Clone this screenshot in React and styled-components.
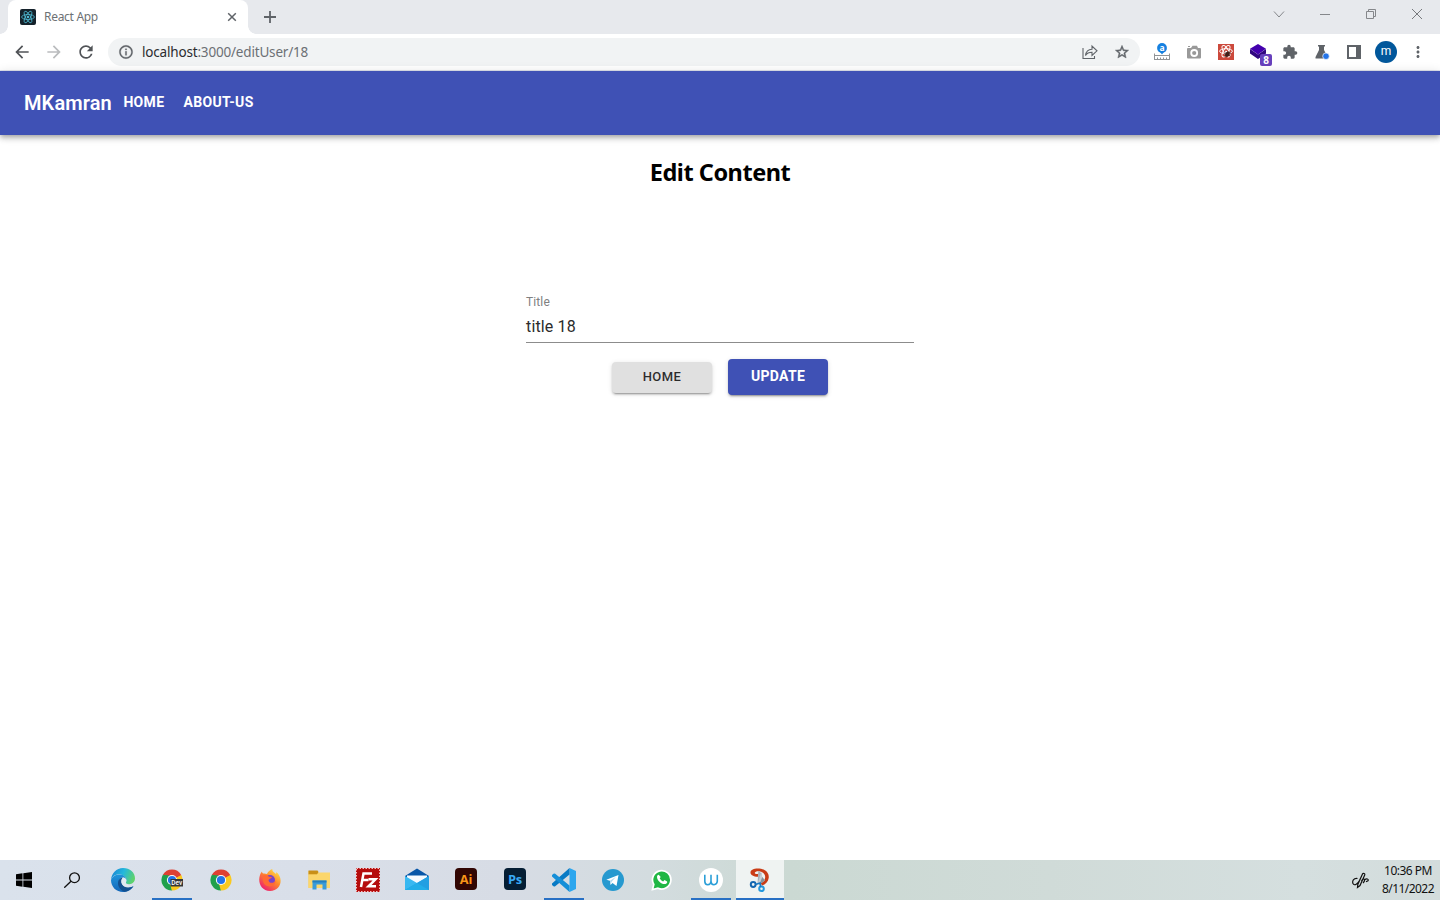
import React from "react";
import styled, { createGlobalStyle, css } from "styled-components";
import {
  MdArrowBack,
  MdArrowForward,
  MdRefresh,
  MdInfoOutline,
  MdStarBorder,
  MdExtension,
  MdMoreVert,
} from "react-icons/md";

const GlobalStyle = createGlobalStyle`
  * { box-sizing: border-box; }
  html, body { margin: 0; padding: 0; background: #fff; overflow: hidden; }
  svg { display: block; flex: none; }
`;

const Screen = styled.div`
  width: 1440px;
  height: 900px;
  display: flex;
  flex-direction: column;
  background: #fff;
  font-family: "Open Sans", "Noto Sans", sans-serif;
  overflow: hidden;
`;

/* Browser chrome */
const TabStrip = styled.header`
  height: 34px;
  display: flex;
  align-items: stretch;
  padding-left: 8px;
  background: #e7e9ed;
`;
const Tab = styled.div`
  position: relative;
  width: 240px;
  padding: 0 10px 0 12px;
  display: flex;
  align-items: center;
  background: #fff;
  border-radius: 8px 8px 0 0;
  &::before, &::after {
    content: "";
    position: absolute;
    bottom: 0;
    width: 8px;
    height: 8px;
  }
  &::before { left: -8px; background: radial-gradient(circle at 0 0, transparent 7.5px, #fff 8px); }
  &::after { right: -8px; background: radial-gradient(circle at 100% 0, transparent 7.5px, #fff 8px); }
`;
const TabTitle = styled.span`
  flex: 1;
  margin-left: 8px;
  font-family: "Noto Sans", sans-serif;
  font-size: 12px;
  line-height: 16px;
  letter-spacing: -0.3px;
  color: #6d7175;
`;
const NewTab = styled.div`
  width: 44px;
  display: flex;
  align-items: center;
  justify-content: center;
`;
const WindowControls = styled.div`
  margin-left: auto;
  height: 28px;
  display: flex;
`;
const WindowButton = styled.div`
  width: 46px;
  display: flex;
  align-items: center;
  justify-content: center;
`;
const Toolbar = styled.nav`
  height: 37px;
  padding: 0 6px;
  display: flex;
  align-items: center;
  background: #fff;
  border-bottom: 1px solid #e1e4ee;
`;
const ToolButton = styled.div`
  width: 32px;
  height: 32px;
  flex: none;
  display: flex;
  align-items: center;
  justify-content: center;
  color: ${(p) => (p.$faded ? "#babcbe" : "#5f6368")};
  ${(p) => p.$dark && css`color: #505357;`}
`;
const AddressBar = styled.div`
  width: 1032px;
  height: 28px;
  margin: 0 6px;
  padding: 0 2px 0 10px;
  display: flex;
  align-items: center;
  border-radius: 14px;
  background: #f1f3f4;
  color: #5f6368;
  path[fill="none"] { stroke: none; }
`;
const Url = styled.span`
  flex: 1;
  margin-left: 8px;
  font-family: "Noto Sans", sans-serif;
  font-size: 13.5px;
  line-height: 20px;
  letter-spacing: -0.18px;
  color: #6c7075;
  b { font-weight: 400; color: #2b2c2f; }
`;
const Avatar = styled.div`
  width: 22px;
  height: 22px;
  border-radius: 50%;
  display: flex;
  align-items: center;
  justify-content: center;
  background: #01579b;
  color: #fff;
  font: 12px/20px Roboto, sans-serif;
  padding-bottom: 2px;
`;

/* Application */
const AppBar = styled.div`
  position: relative;
  height: 64px;
  flex: none;
  padding: 0 24px;
  display: flex;
  align-items: center;
  background: #3f51b5;
  color: #fff;
  font-family: Roboto, sans-serif;
  box-shadow: 0 2px 4px -1px rgba(0,0,0,.2), 0 4px 5px rgba(0,0,0,.14), 0 1px 10px rgba(0,0,0,.12);
`;
const Brand = styled.div`
  width: 99.4px;
  font-size: 20px;
  font-weight: 600;
  line-height: 32px;
  letter-spacing: 0.1px;
`;
const NavLink = styled.a`
  margin-right: 19px;
  padding-bottom: 2px;
  font-size: 14px;
  font-weight: 700;
  line-height: 24px;
  letter-spacing: 0.34px;
`;
const Content = styled.main`
  flex: 1;
  display: flex;
  flex-direction: column;
  align-items: center;
`;
const Heading = styled.h2`
  margin: 21px 0 102px;
  font-family: "Noto Sans", sans-serif;
  font-size: 23.5px;
  line-height: 32px;
  letter-spacing: -0.47px;
  color: #000;
`;
const Form = styled.form`
  width: 388px;
  display: flex;
  flex-direction: column;
  font-family: Roboto, sans-serif;
`;
const Label = styled.label`
  margin-top: 4px;
  font-size: 12px;
  line-height: 16px;
  letter-spacing: 0.12px;
  color: #808080;
`;
const Field = styled.div`
  height: 33px;
  padding-top: 5px;
  border-bottom: 1px solid #8c8c8c;
  font-size: 16px;
  line-height: 24px;
  letter-spacing: 0.15px;
  color: #2b2b2b;
`;
const Actions = styled.div`
  margin-top: 16px;
  display: flex;
  justify-content: center;
  align-items: center;
  gap: 16px;
`;
const Button = styled.button`
  width: 100px;
  height: ${(p) => (p.$primary ? "36px" : "31px")};
  padding: 0 0 ${(p) => (p.$primary ? "2px" : "0")};
  border: 0;
  border-radius: 4px;
  background: ${(p) => (p.$primary ? "#3f51b5" : "#e0e0e0")};
  color: ${(p) => (p.$primary ? "#fff" : "rgba(0,0,0,.82)")};
  font: ${(p) => (p.$primary ? "700 14px/24px" : "500 13px/22px")} Roboto, sans-serif;
  letter-spacing: ${(p) => (p.$primary ? "0.3px" : "0.46px")};
  box-shadow: 0 3px 1px -2px rgba(0,0,0,.2), 0 2px 2px rgba(0,0,0,.14), 0 1px 5px rgba(0,0,0,.12);
`;

/* Desktop taskbar */
const Taskbar = styled.footer`
  height: 40px;
  display: flex;
  background: linear-gradient(90deg, #dae2ec 0, #d9dfe9 300px, #d7dce5 500px, #d3dcdf 650px, #cbd9d3 790px, #d0dbd8 1050px, #d5dfdf 1300px, #d3dcdc 1440px);
`;
const TaskItem = styled.div`
  width: 48px;
  flex: none;
  margin-left: ${(p) => (p.$first ? "0" : p.$wide ? "3px" : "1px")};
  display: flex;
  align-items: center;
  justify-content: center;
  background: ${(p) => (p.$active ? "#eff3f2" : "none")};
  ${(p) => (p.$open || p.$active) && css`
    background-image: linear-gradient(#2870c4, #2870c4);
    background-size: ${p.$active ? "48px" : "40px"} 2px;
    background-position: center bottom;
    background-repeat: no-repeat;
  `}
`;
const Tray = styled.div`
  margin-left: auto;
  padding-right: 6px;
  display: flex;
  align-items: center;
  gap: 13px;
`;
const Clock = styled.div`
  display: flex;
  flex-direction: column;
  align-items: flex-end;
  font-family: "Noto Sans", sans-serif;
  font-size: 12px;
  line-height: 18px;
  color: #111;
  span:first-child { margin-right: 2px; letter-spacing: -0.5px; }
  span:last-child { letter-spacing: -0.55px; }
`;

const Atom = ({ color, bg, bug }) => (
  <svg width="16" height="16" viewBox="0 0 16 16">
    <rect width="16" height="16" rx={bug ? 0 : 2} fill={bg} />
    <g fill="none" stroke={color} strokeWidth={bug ? 1 : 0.8} transform={bug ? "translate(0 -.8)" : undefined}>
      <ellipse cx="8" cy="8" rx="6.4" ry="2.5" />
      <ellipse cx="8" cy="8" rx="6.4" ry="2.5" transform="rotate(60 8 8)" />
      <ellipse cx="8" cy="8" rx="6.4" ry="2.5" transform="rotate(120 8 8)" />
    </g>
    <circle cx="8" cy="8" r="1.3" fill={color} />
    {bug && (
      <g stroke="#40201a" fill="#40201a" strokeWidth=".7">
        <ellipse cx="9.3" cy="10.3" rx="1.8" ry="2.7" transform="rotate(40 9.3 10.3)" />
        <path d="M6 9.500l6 2M7 7.500l5 5M6.500 12.500l5.500-4M10.500 7.500l2.500 2" />
      </g>
    )}
  </svg>
);

const Chrome = ({ dev }) => (
  <svg width="24" height="24" viewBox="0 0 24 24">
    <path d="M12 12 2.9 6.750A10.500 10.500 0 0 1 21.1 6.750Z" fill="#de4033" />
    <path d="M12 12 21.1 6.750A10.500 10.500 0 0 1 12 22.500Z" fill="#fbc91d" />
    <path d="M12 12 12 22.500A10.500 10.500 0 0 1 2.9 6.750Z" fill="#1fa04b" />
    <path d="M12 6.9h9.2L12 12Z" fill="#de4033" />
    <path d="m16.500 14.500-4.700 8-2-7.500Z" fill="#fbc91d" />
    <path d="m7.500 14.600-4.600-7.850 6.600.75Z" fill="#1fa04b" />
    <circle cx="12" cy="12" r="5.1" fill="#fff" />
    <circle cx="12" cy="12" r="4.1" fill="#2474e8" />
    {dev && (
      <>
        <rect x="10.5" y="11" width="12.5" height="7.5" fill="#343638" />
        <text x="16.8" y="17" textAnchor="middle" fontFamily="Roboto" fontSize="6.5" fontWeight="500" fill="#fff">Dev</text>
      </>
    )}
  </svg>
);

const Edge = () => (
  <svg width="24" height="24" viewBox="0 0 24 24">
    <defs>
      <linearGradient id="edgeTop" x1="0" y1=".2" x2="1" y2=".5">
        <stop offset="0" stopColor="#1a84d4" /><stop offset=".5" stopColor="#24b8dc" /><stop offset="1" stopColor="#5fd36a" />
      </linearGradient>
      <linearGradient id="edgeLow" x1="0" y1="0" x2="0" y2="1">
        <stop offset="0" stopColor="#1f95dc" /><stop offset="1" stopColor="#1466b8" />
      </linearGradient>
    </defs>
    <path d="M0 12C.5 5 5.500 0 12 0c7 0 12 4.700 12 10.300 0 3.700-2.700 5.900-5.700 5.900-2.600 0-4-1-3.400-1.900C16.500 12 15 8 10 6.500 5.500 5.500 1.500 8 0 12Z" fill="url(#edgeTop)" />
    <path d="M0 12C1.500 8 5.500 6 9.500 6.500c4 .6 6.200 3.500 5.800 6-.3-1.700-1.500-3-3.400-3-2.700 0-4.400 2.600-3.700 5.500 1 4.300 7 6.800 14.300 3.200C19.500 22.500 16 24 12 24 5.300 24 0 19 0 12Z" fill="url(#edgeLow)" />
    <path d="M11.900 9.500C7.500 9.800 6 14.500 7.700 18.500c1 2.500 3.300 4.700 6 5.300 3.500-.5 6.700-2.500 8.800-5.600-4.700 2.200-9.500 1.500-11.300-1.700-1.400-2.500-.9-5 .7-7Z" fill="#13508f" />
    <path d="M11.900 9.500c-1.800 2-2 4.200-1 6.200 1.500 2.700 5 3.700 8.500 2.300-3.300-.3-5-1.700-4.500-3.700.9-1.300.6-4.600-3-4.800Z" fill="#e1e8f0" />
  </svg>
);

const Firefox = () => (
  <svg width="24" height="24" viewBox="0 0 24 24">
    <defs>
      <linearGradient id="fox" x1=".85" y1=".05" x2=".2" y2=".9">
        <stop offset="0" stopColor="#ffe34b" /><stop offset=".45" stopColor="#ff8a2b" /><stop offset="1" stopColor="#ee246c" />
      </linearGradient>
    </defs>
    <path d="M2 7c.4-1.500 1.300-2.800 2-3.500 0 1 .5 1.500 1 2C6 5.300 8 5.400 9 6c1-2.500 3-4 5.300-5-.4 2.500 2.200 3.500 3.700 5 .4-.8.3-1.500.2-2C25.500 9 24 23 12 23 3 23-.5 14 2 7Z" fill="url(#fox)" />
    <circle cx="12" cy="12" r="5" fill="#7843ca" />
    <path d="M5 7.500c2-1 4-.6 6 1.200l3 .2c-.5 1.600-2.500 1.500-3.500 3C11 16 16 15.500 17.500 12.500c.2 4.500-4 7-8 5.500C5 17 4 11 5 7.500Z" fill="#ff6a34" />
  </svg>
);

const Folder = () => (
  <svg width="24" height="24" viewBox="0 0 24 24">
    <path d="M1.500 3h9l1.500 2.500h11V20h-21.500Z" fill="#f6cb54" />
    <path d="M1.500 2.500h9L11.500 4 10 6.500H1.500Z" fill="#c99018" />
    <path d="M1.500 6.500H10l2-2h11V20H1.500Z" fill="#fbd66c" />
    <path d="M5.500 12.500h14v9h-4v-5h-6v5h-4Z" fill="#399bd8" />
    <path d="M5.500 12.500h14v2h-14Z" fill="#237fbe" />
  </svg>
);

const FileZilla = () => (
  <svg width="24" height="24" viewBox="1 1 24 24">
    <rect x="1" y="1" width="24" height="24" fill="#b50d0d" />
    <rect x="1.5" y="1.5" width="23" height="23" fill="none" stroke="#f7c2c2" strokeWidth="1" strokeDasharray="1.5 1.5" />
    <g fill="none" stroke="#fff" strokeWidth="2.5">
      <path d="M6 20 8.500 6.500H17M7.500 13h6" />
      <path d="M13.500 12.300h7L13.500 19.300h7.500" />
    </g>
  </svg>
);

const Mail = () => (
  <svg width="26" height="26" viewBox="0 0 26 26">
    <path d="m1 9 12-7.500L25 9v5H1Z" fill="#0756a8" />
    <path d="M3 8.500h20V17H3Z" fill="#f5faff" />
    <path d="M1 9 13 16l12-7v14H1Z" fill="#38b8f1" />
    <path d="M25 9v14H1l12-7Z" fill="#229fe2" />
    <path d="m1 23 12-7 12 7Z" fill="#22aee9" />
  </svg>
);

const Adobe = ({ label, bg, color }) => (
  <svg width="24" height="24" viewBox="0 0 24 24">
    <rect x="1" y="0" width="22" height="22" rx="4" fill={bg} />
    <text x="12" y="15.5" textAnchor="middle" fontFamily="Open Sans, sans-serif" fontWeight="700" fontSize="12.8" letterSpacing="-.2" fill={color}>{label}</text>
  </svg>
);

const Code = () => (
  <svg width="24" height="24" viewBox="0 0 24 24">
    <path d="M17.500 0 24 3v18l-6.500 3Z" fill="#2ca6ee" />
    <path d="M17.500 0v6.600L3.200 18.300a1.500 1.500 0 0 1-1.700 0L0 17a1 1 0 0 1 0-1.600Z" fill="#087ac5" />
    <path d="M17.500 24v-6.600L3.200 5.700a1.500 1.500 0 0 0-1.700 0L0 7a1 1 0 0 0 0 1.600Z" fill="#158fd8" />
  </svg>
);

const Snip = () => (
  <svg width="24" height="26" viewBox="0 0 24 26">
    <path d="M2.500 5C3 2 8 .8 13 1.800c5.500 1.200 8.300 5 7.700 9.200-.6 3.800-3.200 6.500-6.700 7.500l-1.500-2.700c2.700-1 4.500-3 4.700-5.500C17.400 7 14.500 4.500 10.500 4.300c-2.200 0-3.800.7-3.700 1.600.1.800 1.500 1.300 3.700.8v3C6 10 2 8 2.500 5Z" fill="#c93c16" />
    <path d="m10.300 3.800-.8 12.700 2.500.5 1.700-10.500Z" fill="#a7b1b9" />
    <path d="m13.500 4.500.8 5.500 2.700 3.500-5.500 3.800-1.500-1.800Z" fill="#c8ced3" />
    <path d="m14.300 10 2.700 3.500-5.500 3.800Z" fill="#87939d" />
    <circle cx="5.200" cy="17.500" r="2.400" fill="none" stroke="#1467b0" strokeWidth="2" />
    <circle cx="13.500" cy="21.700" r="2.300" fill="none" stroke="#2498dd" strokeWidth="2" />
    <path d="m7.500 17.500 4.500-1.500.8 4" fill="none" stroke="#1879c2" strokeWidth="1.700" />
  </svg>
);

const apps = [
  { name: "edge", icon: <Edge />, wide: true },
  { name: "dev", icon: <Chrome dev />, open: true },
  { name: "chrome", icon: <Chrome /> },
  { name: "firefox", icon: <Firefox /> },
  { name: "files", icon: <Folder /> },
  { name: "filezilla", icon: <FileZilla /> },
  { name: "mail", icon: <Mail /> },
  { name: "illustrator", icon: <Adobe label="Ai" bg="#310603" color="#f79518" /> },
  { name: "photoshop", icon: <Adobe label="Ps" bg="#051e34" color="#38a9f5" /> },
  { name: "code", icon: <Code />, open: true },
  {
    name: "telegram",
    icon: (
      <svg width="22" height="22" viewBox="0 0 22 22">
        <circle cx="11" cy="11" r="11" fill="#2699cf" />
        <path d="m4.300 10.800 12.200-4.900-2 11-4-3-2 2-.5-4.200Z" fill="#fff" />
        <path d="m8 11.700 6-3.900-4.200 4.600-1.200 2.700Z" fill="#b3d9ee" />
      </svg>
    ),
  },
  {
    name: "whatsapp",
    icon: (
      <svg width="22" height="22" viewBox="0 0 22 22">
        <path d="m1.500 20.500 1.300-5A9.200 9.200 0 1 1 7 19.200Z" fill="#20b744" stroke="#fff" strokeWidth="1.7" />
        <path d="M7.700 5.700c-1 0-1.700 1-1.700 2.200 0 3.500 5 8 8.500 7 1.500-.5 2-1.500 1.600-2.400L13.500 11l-1.300 1.500c-1.500-.6-2.700-1.700-3.500-3.200l1-1.200Z" fill="#fff" />
      </svg>
    ),
  },
  {
    name: "workspace",
    open: true,
    icon: (
      <svg width="24" height="24" viewBox="0 0 24 24">
        <circle cx="12" cy="12" r="12" fill="#fff" />
        <path d="M5.800 6.700v6.600q0 3.400 3 3.400t3.200-3.400V6.700M12 13.300q0 3.400 3 3.400t3.300-3.400V6.700" fill="none" stroke="#2b9fd8" strokeWidth="1.6" />
      </svg>
    ),
  },
  { name: "snip", icon: <Snip />, active: true },
];

export default function App() {
  return (
    <Screen>
      <GlobalStyle />
      <TabStrip>
        <Tab>
          <Atom color="#4eb9d2" bg="#15222b" />
          <TabTitle>React App</TabTitle>
          <svg width="12" height="12" viewBox="0 0 12 12"><path d="m2.200 2.200 7.600 7.600m0-7.600-7.600 7.600" stroke="#5f6368" strokeWidth="1.5" /></svg>
        </Tab>
        <NewTab>
          <svg width="12" height="12" viewBox="0 0 12 12"><path d="M6 0v12M0 6h12" stroke="#5f6368" strokeWidth="1.8" /></svg>
        </NewTab>
        <WindowControls>
          <WindowButton><svg width="12" height="12" viewBox="0 0 12 12" fill="none" stroke="#85878b"><path d="m1 3.500 5 5.500 5-5.500" /></svg></WindowButton>
          <WindowButton><svg width="10" height="10" viewBox="0 0 10 10"><path d="M0 5.500h10" stroke="#85878b" /></svg></WindowButton>
          <WindowButton><svg width="10" height="10" viewBox="0 0 10 10" fill="none" stroke="#85878b"><path d="M.5 2.500h7v7h-7ZM2.500 2.500v-2h7v7h-2" /></svg></WindowButton>
          <WindowButton><svg width="10" height="10" viewBox="0 0 10 10"><path d="m0 0 10 10M10 0 0 10" stroke="#77797d" /></svg></WindowButton>
        </WindowControls>
      </TabStrip>
      <Toolbar>
        <ToolButton $dark><MdArrowBack size={20} /></ToolButton>
        <ToolButton $faded><MdArrowForward size={20} /></ToolButton>
        <ToolButton $dark><MdRefresh size={20} /></ToolButton>
        <AddressBar>
          <MdInfoOutline size={16} stroke="currentColor" strokeWidth=".4" />
          <Url><b>localhost</b>:3000/editUser/18</Url>
          <ToolButton>
            <svg width="16" height="16" viewBox="0 0 16 16" fill="none" stroke="#5f6368" strokeWidth="1.1">
              <path d="M1 4v10.500h11.500V12M3.500 11.500C4 7.500 6 5.300 10 5.200V2l5 4.800-5 4.700V8.300c-3 0-5 .7-6.500 3.200Z" />
            </svg>
          </ToolButton>
          <ToolButton><MdStarBorder size={16} stroke="currentColor" strokeWidth=".7" /></ToolButton>
        </AddressBar>
        <ToolButton>
          <svg width="16" height="18" viewBox="0 0 16 18">
            <circle cx="8" cy="5" r="4.9" fill="#1580e0" /><path d="m6 9 2 2.500L10 9Z" fill="#1580e0" />
            <text x="8" y="7.7" textAnchor="middle" fontFamily="Open Sans" fontSize="8.5" fontWeight="700" fill="#fff">a</text>
            <path d="M.5 10.500v6M15.500 10.500v6M0 12.500h16M0 16.500h16M3.500 14.500v2M6.500 14.500v2M9.500 14.500v2M12.500 14.500v2" fill="none" stroke="#909396" />
          </svg>
        </ToolButton>
        <ToolButton>
          <svg width="14" height="14" viewBox="0 0 14 14">
            <path d="M1 3h3L5.500.8H10L11 3h2a1 1 0 0 1 1 1v8.500a1 1 0 0 1-1 1H1a1 1 0 0 1-1-1V4a1 1 0 0 1 1-1Z" fill="#999" />
            <path d="M1 2V1h2v1Z" fill="#999" />
            <circle cx="7.2" cy="8" r="3" fill="none" stroke="#fff" strokeWidth="1.8" />
          </svg>
        </ToolButton>
        <ToolButton><Atom color="#fff" bg="#cc493c" bug /></ToolButton>
        <ToolButton>
          <svg width="28" height="28" viewBox="0 0 28 28">
            <path d="m6 11 8 5.500 8-5.500v4.500L14 21l-8-5.500Z" fill="#30077f" />
            <path d="m14 6 8 4.700-8 5.800-8-5.800Z" fill="#4300ad" />
            <rect x="16" y="16" width="12" height="12" rx="2" fill="#6740bc" />
            <text x="22" y="25.6" textAnchor="middle" fontFamily="Open Sans" fontSize="10" fontWeight="700" fill="#fff">8</text>
          </svg>
        </ToolButton>
        <ToolButton><MdExtension size={16} /></ToolButton>
        <ToolButton>
          <svg width="16" height="16" viewBox="0 0 16 16">
            <path d="M4 1h7v1.500h-1V6l4.500 8.500h-13V13L5 6V2.500H4Z" fill="#5f6368" />
            <circle cx="12" cy="12.2" r="3.3" fill="#2474e8" stroke="#fff" strokeWidth=".7" />
          </svg>
        </ToolButton>
        <ToolButton>
          <svg width="14" height="14" viewBox="0 0 14 14"><path d="M1 1h12v12H1Z" fill="none" stroke="#5f6368" strokeWidth="2" /><path d="M9 1h4v12H9Z" fill="#5f6368" /></svg>
        </ToolButton>
        <ToolButton><Avatar>m</Avatar></ToolButton>
        <ToolButton><MdMoreVert size={18} /></ToolButton>
      </Toolbar>
      <AppBar>
        <Brand>MKamran</Brand>
        <NavLink>HOME</NavLink>
        <NavLink>ABOUT-US</NavLink>
      </AppBar>
      <Content>
        <Heading>Edit Content</Heading>
        <Form onSubmit={(e) => e.preventDefault()}>
          <Label>Title</Label>
          <Field>title 18</Field>
          <Actions>
            <Button type="button">HOME</Button>
            <Button type="submit" $primary>UPDATE</Button>
          </Actions>
        </Form>
      </Content>
      <Taskbar>
        <TaskItem $first>
          <svg width="16" height="16" viewBox="0 0 16 16"><path d="M0 2.200 6.500 1.300v6.200H0ZM7.300 1.200 16 0v7.500H7.300ZM0 8.400h6.500v6.300L0 13.800ZM7.300 8.400H16V16l-8.700-1.200Z" /></svg>
        </TaskItem>
        <TaskItem $first>
          <svg width="16" height="16" viewBox="0 0 16 16" fill="none" stroke="#111" strokeWidth="1.3"><circle cx="10.5" cy="5.7" r="4.9" /><path d="M7 9.200.3 15.700" /></svg>
        </TaskItem>
        {apps.map((app) => (
          <TaskItem key={app.name} $wide={app.wide} $open={app.open} $active={app.active}>{app.icon}</TaskItem>
        ))}
        <Tray>
          <svg width="17" height="17" viewBox="0 0 17 17" fill="none" stroke="#111" strokeWidth="1.2">
            <path d="M5.500 6.500C1.500 6 0 9 1 11.500c1.500 3 5 0 6.500-3L10.500 2c.7-1.300 2.700-.5 2.200 1L8 13.500l-2.500 2 .3-3L10.500 2M9.500 9c3-5 4 0 1.500 2M12.500 8c2-2 4.500-1 3.500.8l-2 1" />
          </svg>
          <Clock><span>10:36 PM</span><span>8/11/2022</span></Clock>
        </Tray>
      </Taskbar>
    </Screen>
  );
}
